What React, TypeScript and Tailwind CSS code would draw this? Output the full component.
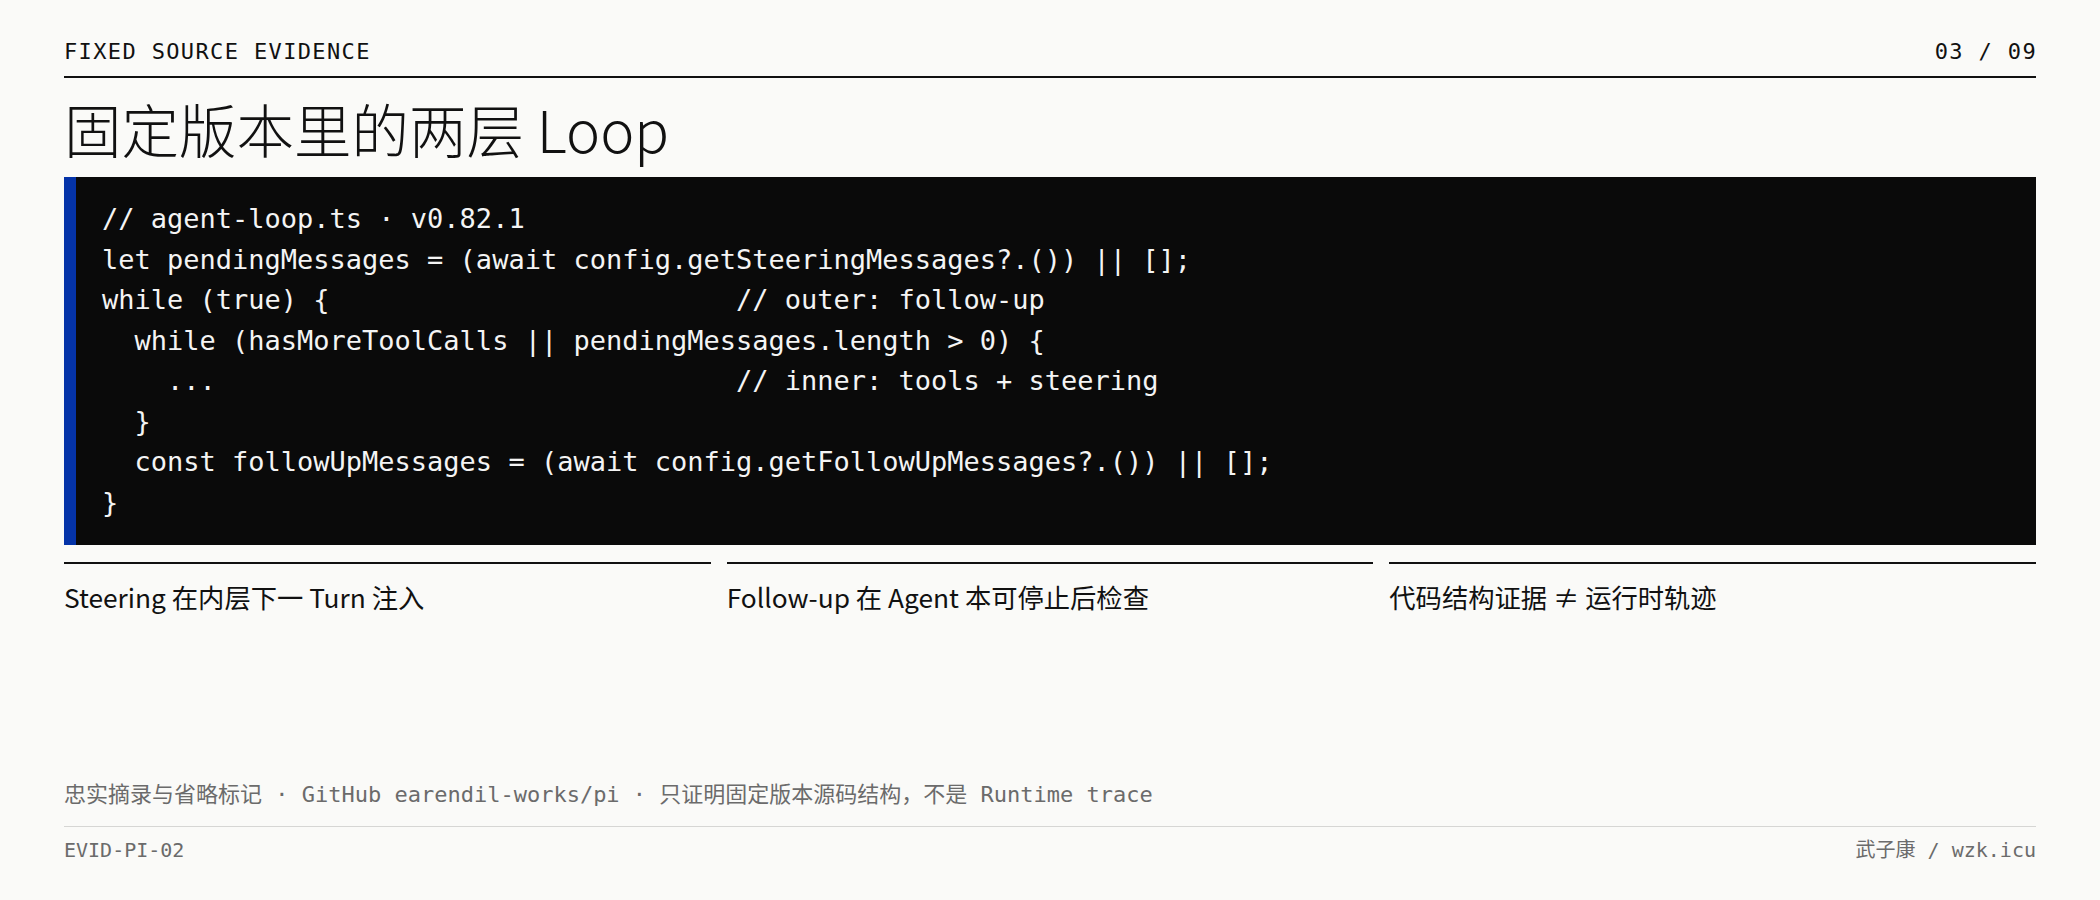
import React from "react";

const mono = "font-['DejaVu_Sans_Mono','Noto_Sans_CJK_SC',monospace]";

const codeLines = [
  "// agent-loop.ts · v0.82.1",
  "let pendingMessages = (await config.getSteeringMessages?.()) || [];",
  "while (true) {                         // outer: follow-up",
  "  while (hasMoreToolCalls || pendingMessages.length > 0) {",
  "    ...                                // inner: tools + steering",
  "  }",
  "  const followUpMessages = (await config.getFollowUpMessages?.()) || [];",
  "}",
];

const points = [
  "Steering 在内层下一 Turn 注入",
  "Follow-up 在 Agent 本可停止后检查",
  "代码结构证据 ≠ 运行时轨迹",
];

export default function App() {
  return (
    <div className="h-[900px] w-full bg-[#fafaf8] text-[#111111] px-[64px] flex flex-col">
      <header
        className={`${mono} flex justify-between items-center pt-[36px] pb-[8px] border-b-2 border-[#111111] text-[22px] leading-[32px] tracking-[0.062em]`}
      >
        <span>FIXED SOURCE EVIDENCE</span>
        <span className="mr-[-1px]">03 / 09</span>
      </header>

      <h1 className="mt-[22px] text-[57.5px] leading-none font-light font-['Noto_Sans_CJK_SC',sans-serif]">
        固定版本里的两层 Loop
      </h1>

      <div className="mt-[19.5px] bg-[#0a0a0a] border-l-[12px] border-[#0433a8] pl-[26px] py-[22px]">
        <pre
          className={`${mono} text-[27px] leading-[40.5px] text-[#f4f4f4] whitespace-pre`}
        >
          {codeLines.join("\n")}
        </pre>
      </div>

      <div className="mt-[17px] grid grid-cols-3 gap-4">
        {points.map((p) => (
          <div
            key={p}
            className="border-t-2 border-[#111111] pt-[13px] text-[26.3px] leading-[39px] font-['Noto_Sans_CJK_SC',sans-serif]"
          >
            {p}
          </div>
        ))}
      </div>

      <footer className={`${mono} mt-auto pb-[35px] text-[#6b6b6b]`}>
        <div className="text-[22px] leading-[33px] pb-[15px] border-b border-[#d6d6d4]">
          忠实摘录与省略标记 · GitHub earendil-works/pi · 只证明固定版本源码结构，不是 Runtime trace
        </div>
        <div className="pt-[8px] flex justify-between text-[20px] leading-[30px]">
          <span>EVID-PI-02</span>
          <span>武子康 / wzk.icu</span>
        </div>
      </footer>
    </div>
  );
}
